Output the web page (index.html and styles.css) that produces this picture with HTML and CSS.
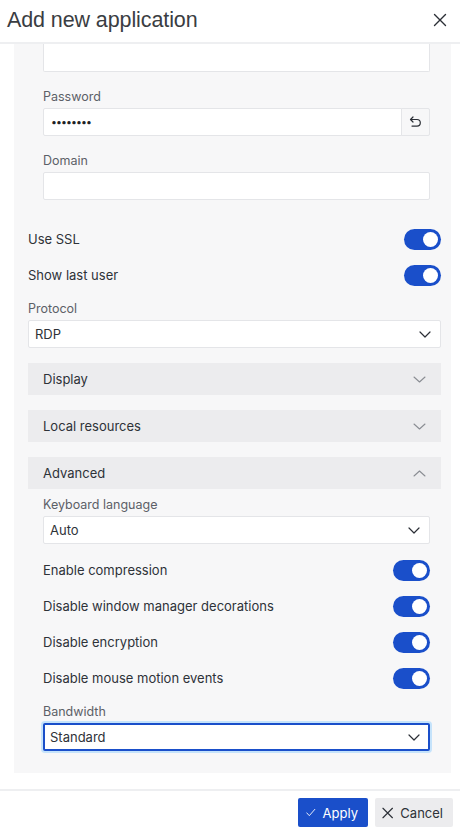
FILE: index.html
```html
<!DOCTYPE html>
<html lang="en">
<head>
<meta charset="utf-8">
<title>Add new application</title>
<link rel="stylesheet" href="styles.css">
</head>
<body>
<div class="dialog">
  <header class="dialog-head">
    <h1 class="dialog-title">Add new application</h1>
    <button class="icon-btn close" aria-label="Close">
      <svg width="14" height="14" viewBox="0 0 14 14"><path d="M1.5 1.5 12.5 12.5M12.5 1.5 1.5 12.5" stroke="#2b2f36" stroke-width="1.4" fill="none" stroke-linecap="round"/></svg>
    </button>
  </header>

  <main class="dialog-body">
    <div class="panel">
      <div class="credentials">
        <div class="input input-cut"></div>

        <label class="field-label">Password</label>
        <div class="input-group">
          <div class="input password">&#8226;&#8226;&#8226;&#8226;&#8226;&#8226;&#8226;&#8226;</div>
          <button class="addon" aria-label="Reset">
            <svg width="13" height="12" viewBox="0 0 13 12"><path d="M4 1 1.5 3.5 4 6M1.8 3.5H8a3.3 3.3 0 0 1 0 6.6H3" stroke="#2b2f36" stroke-width="1.2" fill="none" stroke-linecap="round" stroke-linejoin="round"/></svg>
          </button>
        </div>

        <label class="field-label">Domain</label>
        <div class="input"></div>
      </div>

      <div class="switch-row">
        <span>Use SSL</span>
        <span class="toggle on"></span>
      </div>
      <div class="switch-row">
        <span>Show last user</span>
        <span class="toggle on"></span>
      </div>

      <label class="field-label first">Protocol</label>
      <div class="select">
        <span>RDP</span>
        <svg class="caret" width="12" height="7" viewBox="0 0 12 7"><path d="M1 1l5 5 5-5" stroke="#2b2f36" stroke-width="1.2" fill="none" stroke-linecap="round" stroke-linejoin="round"/></svg>
      </div>

      <div class="accordion">
        <span>Display</span>
        <svg width="13" height="7" viewBox="0 0 13 7"><path d="M1 1l5.5 5 5.5-5" stroke="#8a8d93" stroke-width="1.1" fill="none" stroke-linecap="round" stroke-linejoin="round"/></svg>
      </div>
      <div class="accordion">
        <span>Local resources</span>
        <svg width="13" height="7" viewBox="0 0 13 7"><path d="M1 1l5.5 5 5.5-5" stroke="#8a8d93" stroke-width="1.1" fill="none" stroke-linecap="round" stroke-linejoin="round"/></svg>
      </div>
      <div class="accordion">
        <span>Advanced</span>
        <svg width="13" height="7" viewBox="0 0 13 7"><path d="M1 6l5.5-5 5.5 5" stroke="#8a8d93" stroke-width="1.1" fill="none" stroke-linecap="round" stroke-linejoin="round"/></svg>
      </div>

      <div class="advanced">
        <label class="field-label first">Keyboard language</label>
        <div class="select">
          <span>Auto</span>
          <svg class="caret" width="12" height="7" viewBox="0 0 12 7"><path d="M1 1l5 5 5-5" stroke="#2b2f36" stroke-width="1.2" fill="none" stroke-linecap="round" stroke-linejoin="round"/></svg>
        </div>

        <div class="toggles">
          <div class="switch-row"><span>Enable compression</span><span class="toggle on"></span></div>
          <div class="switch-row"><span>Disable window manager decorations</span><span class="toggle on"></span></div>
          <div class="switch-row"><span>Disable encryption</span><span class="toggle on"></span></div>
          <div class="switch-row"><span>Disable mouse motion events</span><span class="toggle on"></span></div>
        </div>

        <label class="field-label first">Bandwidth</label>
        <div class="select focused">
          <span>Standard</span>
          <svg class="caret" width="12" height="7" viewBox="0 0 12 7"><path d="M1 1l5 5 5-5" stroke="#2b2f36" stroke-width="1.2" fill="none" stroke-linecap="round" stroke-linejoin="round"/></svg>
        </div>
      </div>
    </div>
  </main>

  <footer class="dialog-foot">
    <button class="btn primary">
      <svg width="13" height="11" viewBox="0 0 13 11"><path d="M1 6 4.5 9.8 12 1.2" stroke="#fff" stroke-width="1.2" fill="none" stroke-linecap="round" stroke-linejoin="round"/></svg>
      Apply
    </button>
    <button class="btn secondary">
      <svg width="12" height="12" viewBox="0 0 12 12"><path d="M1 1 11 11M11 1 1 11" stroke="#2b2f36" stroke-width="1.2" fill="none" stroke-linecap="round"/></svg>
      Cancel
    </button>
  </footer>
</div>
</body>
</html>
```

FILE: styles.css
```css
* {
  box-sizing: border-box;
}

html, body {
  margin: 0;
  padding: 0;
  background: #fff;
}

body {
  font-family: Inter, "Noto Sans", sans-serif;
  font-size: 13px;
  color: #2e3238;
}

.dialog {
  width: 460px;
  height: 833px;
  display: flex;
  flex-direction: column;
  overflow: hidden;
}

.dialog-head {
  height: 44px;
  flex: none;
  display: flex;
  align-items: center;
  justify-content: space-between;
  padding: 0 12px 2px 7px;
  border-bottom: 2px solid #eeeff1;
}

.dialog-title {
  margin: 0;
  font-family: "Liberation Sans", Arial, sans-serif;
  font-weight: 400;
  font-size: 21.5px;
  color: #3a3d42;
  letter-spacing: -0.1px;
}

.icon-btn {
  border: 0;
  background: none;
  padding: 0;
  display: flex;
  align-items: center;
  justify-content: center;
  width: 16px;
  height: 16px;
}

.dialog-body {
  flex: none;
  padding: 0 9px 0 14px;
}

.panel {
  background: #f7f7f8;
  padding: 0 10px 22px 14px;
}

.credentials {
  padding: 0 11px 21px 15px;
}

.field-label {
  display: block;
  line-height: 16px;
  margin: 17px 0 3px;
  color: #5c6067;
  font-size: 12.5px;
}

.field-label.first {
  margin-top: 8px;
}

.input {
  height: 28px;
  background: #fff;
  border: 1px solid #e4e5e8;
  border-radius: 2px;
}

.input-cut {
  border-top: 0;
  border-radius: 0 0 2px 2px;
}

.input-group {
  display: flex;
}

.input-group .input {
  flex: 1;
  border-radius: 2px 0 0 2px;
}

.password {
  display: flex;
  align-items: center;
  padding: 0 7px;
  font-size: 10.5px;
  letter-spacing: -0.9px;
  color: #1f2227;
}

.addon {
  width: 29px;
  height: 28px;
  border: 1px solid #e4e5e8;
  margin-left: -1px;
  background: #f7f7f8;
  border-radius: 0 2px 2px 0;
  display: flex;
  align-items: center;
  justify-content: center;
  padding: 0;
}

.switch-row {
  height: 36px;
  display: flex;
  align-items: center;
  justify-content: space-between;
  color: #2e3238;
}

.toggle {
  width: 37px;
  height: 21px;
  border-radius: 11px;
  background: #c6c8cc;
  position: relative;
  flex: none;
}

.toggle.on {
  background: #1a4fca;
}

.toggle::after {
  content: "";
  position: absolute;
  top: 3px;
  left: 3px;
  width: 15px;
  height: 15px;
  border-radius: 50%;
  background: #fff;
}

.toggle.on::after {
  left: 19px;
}

.select {
  height: 28px;
  background: #fff;
  border: 1px solid #e4e5e8;
  border-radius: 2px;
  display: flex;
  align-items: center;
  justify-content: space-between;
  padding: 0 9px 0 6px;
}

.select.focused {
  border: 2px solid #1a4fca;
  box-shadow: 0 0 0 2px #c5e3fb;
  padding: 0 8px 0 5px;
}

.accordion {
  height: 32px;
  margin-top: 15px;
  background: #ececee;
  display: flex;
  align-items: center;
  justify-content: space-between;
  padding: 0 15px 0 15px;
  color: #2e3238;
}

.advanced {
  padding: 0 11px 0 15px;
}

.toggles {
  margin-top: 8px;
}

.dialog-foot {
  margin-top: 16px;
  border-top: 2px solid #eeeff1;
  display: flex;
  justify-content: flex-end;
  gap: 7px;
  padding: 7px 7px 0 0;
}

.btn {
  height: 29px;
  border: 0;
  border-radius: 2px;
  display: flex;
  align-items: center;
  gap: 7px;
  font-family: Inter, "Noto Sans", sans-serif;
  font-size: 13px;
  padding: 0 10px 0 8px;
}

.btn.primary {
  width: 70px;
  background: #1a4fca;
  color: #fff;
}

.btn.secondary {
  width: 78px;
  background: #ececee;
  color: #2e3238;
  padding-left: 7px;
}
```
